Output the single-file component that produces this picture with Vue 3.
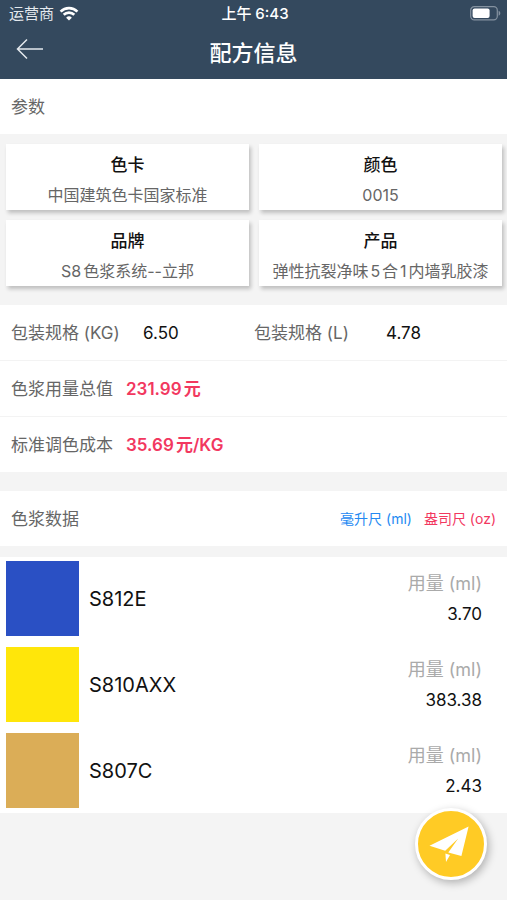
<script setup>
import { ref } from 'vue'

const params = [
  { title: '色卡', value: '中国建筑色卡国家标准' },
  { title: '颜色', value: '0015' },
  { title: '品牌', value: 'S8色浆系统--立邦' },
  { title: '产品', value: '弹性抗裂净味5合1内墙乳胶漆' }
]

const specs = [
  { label: '包装规格 (KG)', value: '6.50' },
  { label: '包装规格 (L)', value: '4.78' }
]

const costs = [
  { label: '色浆用量总值', value: '231.99元' },
  { label: '标准调色成本', value: '35.69元/KG' }
]

const colorants = [
  { code: 'S812E', color: '#2a50c4', ml: 3.7 },
  { code: 'S810AXX', color: '#ffe60a', ml: 383.38 },
  { code: 'S807C', color: '#dbad57', ml: 2.43 }
]

const unit = ref('ml')

const amount = (item) => {
  const value = unit.value === 'ml' ? item.ml : item.ml / 29.5735
  return value.toFixed(2)
}
</script>

<template>
  <div class="page">
    <header class="header">
      <div class="status-bar">
        <div class="carrier">
          <span>运营商</span>
          <svg class="wifi" viewBox="0 0 20 15" aria-hidden="true">
            <path d="M1.6 5.6a12 12 0 0 1 16.8 0" />
            <path d="M4.7 8.8a7.6 7.6 0 0 1 10.6 0" />
            <path class="dot" d="M10 14.6l-2.9-2.9a4.1 4.1 0 0 1 5.8 0z" />
          </svg>
        </div>
        <div class="time">上午 6:43</div>
        <div class="power">
          <svg class="battery" viewBox="0 0 31 15" aria-hidden="true">
            <rect class="shell" x="0.7" y="0.7" width="26.6" height="13.2" rx="3.6" />
            <rect class="level" x="2.6" y="2.6" width="17" height="9.4" rx="2" />
            <path class="cap" d="M28.6 4.8c2.3.8 2.3 4.2 0 5z" />
          </svg>
        </div>
      </div>
      <div class="nav-bar">
        <button class="back-btn" type="button" aria-label="返回">
          <svg viewBox="0 0 28 22" aria-hidden="true">
            <path d="M27 11H1.5M11 1.5L1.5 11l9.5 9.5" />
          </svg>
        </button>
        <h1 class="nav-title">配方信息</h1>
      </div>
    </header>

    <main>
      <section>
        <h2 class="section-head">参数</h2>
        <div class="param-grid">
          <div v-for="item in params" :key="item.title" class="param-card">
            <div class="param-title">{{ item.title }}</div>
            <div class="param-value">{{ item.value }}</div>
          </div>
        </div>
        <div class="rows">
          <div class="row">
            <div v-for="item in specs" :key="item.label" class="spec">
              <span class="label">{{ item.label }}</span>
              <span class="spec-value">{{ item.value }}</span>
            </div>
          </div>
          <div v-for="item in costs" :key="item.label" class="row">
            <span class="label">{{ item.label }}</span>
            <strong class="cost-value">{{ item.value }}</strong>
          </div>
        </div>
      </section>

      <section class="colorants">
        <div class="section-head">
          <h2>色浆数据</h2>
          <div class="units">
            <button class="unit-btn unit-ml" type="button" @click="unit = 'ml'">毫升尺 (ml)</button>
            <button class="unit-btn unit-oz" type="button" @click="unit = 'oz'">盎司尺 (oz)</button>
          </div>
        </div>
        <ul class="colorant-list">
          <li v-for="item in colorants" :key="item.code" class="colorant">
            <span class="swatch" :style="{ backgroundColor: item.color }"></span>
            <span class="code">{{ item.code }}</span>
            <div class="usage">
              <div class="usage-label">用量 ({{ unit }})</div>
              <div class="usage-value">{{ amount(item) }}</div>
            </div>
          </li>
        </ul>
      </section>
    </main>

    <button class="send-btn" type="button" aria-label="发送">
      <svg viewBox="0 0 40 37" aria-hidden="true">
        <path d="M39.6 0.6L0.5 19.8l15.7 4.9L29.2 12.4 19.3 26.6l13.1 3.3z" />
        <path d="M16.4 27.6l4.6 1.3-4 7z" />
      </svg>
    </button>
  </div>
</template>

<style>
body {
  margin: 0;
  background-color: #f4f4f4;
}
</style>

<style scoped>
.page {
  min-height: 100vh;
  background-color: #f4f4f4;
  color: #111;
  font-family: Inter, "Noto Sans CJK SC", sans-serif;
  font-size: 17px;
  line-height: 24px;
  text-autospace: normal;
}

h1,
h2 {
  margin: 0;
}

button {
  padding: 0;
  border: none;
  background: none;
  font-family: inherit;
  cursor: pointer;
}

.header {
  background-color: #34495e;
  color: #fff;
}

.status-bar {
  display: grid;
  grid-template-columns: 1fr auto 1fr;
  align-items: center;
  height: 27px;
  padding: 0 6px 0 9px;
  font-size: 15px;
}

.carrier {
  display: flex;
  align-items: center;
  gap: 5px;
  color: #e4e9ee;
}

.wifi {
  width: 20px;
  height: 15px;
  fill: none;
  stroke: #fff;
  stroke-width: 2.7;
}

.wifi .dot {
  fill: #fff;
  stroke: none;
}

.time {
  font-weight: 500;
}

.power {
  display: flex;
  justify-content: flex-end;
}

.battery {
  width: 31px;
  height: 15px;
}

.shell {
  fill: none;
  stroke: #8492a0;
  stroke-width: 1.2;
}

.level {
  fill: #fff;
}

.cap {
  fill: #8492a0;
}

.nav-bar {
  display: grid;
  grid-template-columns: 1fr auto 1fr;
  align-items: center;
  height: 52px;
  padding: 0 16px;
}

.back-btn {
  justify-self: start;
  width: 28px;
  height: 28px;
  margin-bottom: 8px;
}

.back-btn svg {
  display: block;
  width: 28px;
  height: 22px;
  fill: none;
  stroke: #e4e9ee;
  stroke-width: 1.5;
}

.nav-title {
  font-size: 22px;
  font-weight: 500;
  line-height: 32px;
}

.section-head {
  display: flex;
  align-items: center;
  justify-content: space-between;
  height: 55px;
  padding: 0 11px;
  background-color: #fff;
  color: #666;
  font-size: 17px;
  font-weight: 400;
}

.section-head h2 {
  font-size: 17px;
  font-weight: 400;
}

.param-grid {
  display: grid;
  grid-template-columns: 1fr 1fr;
  gap: 10px;
  padding: 10px 5px 19px 6px;
}

.param-card {
  padding: 9px 4px 3px;
  background-color: #fff;
  box-shadow: 2px 3px 4px rgba(0, 0, 0, 0.22);
  text-align: center;
}

.param-title {
  line-height: 24px;
  font-weight: 500;
}

.param-value {
  margin-top: 6px;
  color: #666;
  font-size: 16px;
  white-space: nowrap;
}

.rows {
  background-color: #fff;
}

.row {
  display: flex;
  align-items: center;
  height: 55px;
  padding-left: 11px;
  border-bottom: 1px solid #f3f3f3;
}

.row:last-child {
  border-bottom: none;
}

.label {
  color: #666;
}

.spec {
  display: flex;
  flex: 0 0 49%;
}

.spec .label {
  width: 132px;
}

.cost-value {
  margin-left: 13px;
  color: #f2385f;
  font-weight: 600;
}

.colorants {
  margin-top: 19px;
}

.units {
  display: flex;
  gap: 12px;
}

.unit-btn {
  font-size: 14px;
  line-height: 24px;
}

.unit-ml {
  color: #2489f2;
}

.unit-oz {
  color: #f2385f;
}

.colorant-list {
  display: flex;
  flex-direction: column;
  gap: 11px;
  margin: 11px 0 0;
  padding: 4px 25px 5px 6px;
  background-color: #fff;
  list-style: none;
}

.colorant {
  display: flex;
  align-items: center;
}

.swatch {
  width: 73px;
  height: 75px;
}

.code {
  margin-left: 10px;
  font-size: 20px;
}

.usage {
  margin-left: auto;
  text-align: right;
}

.usage-label {
  color: #aaa;
  font-size: 18px;
}

.usage-value {
  margin-top: 6px;
}

.send-btn {
  position: fixed;
  right: 20px;
  bottom: 20px;
  display: flex;
  align-items: center;
  justify-content: center;
  width: 72px;
  height: 72px;
  padding-right: 5px;
  border: 3px solid #fff;
  border-radius: 50%;
  background-color: #ffcb25;
  box-shadow: 2px 3px 8px rgba(0, 0, 0, 0.28);
}

.send-btn svg {
  flex: none;
  width: 40px;
  height: 37px;
  fill: #fff;
}
</style>
